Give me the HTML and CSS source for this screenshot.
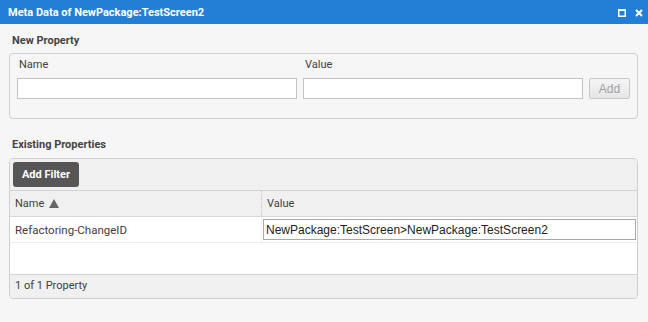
FILE: index.html
```html
<!DOCTYPE html>
<html>
<head>
<meta charset="utf-8">
<link rel="stylesheet" href="styles.css">
</head>
<body>
<div class="window">
  <div class="titlebar">
    <span class="title">Meta Data of NewPackage:TestScreen2</span>
    <span class="tools">
      <svg class="tool" width="8" height="8" viewBox="0 0 8 8"><rect x="0.75" y="1" width="6.5" height="6.25" fill="none" stroke="#fff" stroke-width="1.5"/><rect x="0" y="0" width="8" height="2" fill="#fff"/></svg>
      <svg class="tool" width="8" height="8" viewBox="0 0 8 8"><path d="M1 1 L7 7 M7 1 L1 7" stroke="#fff" stroke-width="2"/></svg>
    </span>
  </div>
  <div class="content">
    <div class="section-title">New Property</div>
    <div class="fieldset">
      <div class="form-grid">
        <label class="lbl">Name</label>
        <label class="lbl">Value</label>
        <span></span>
        <input class="txt" type="text">
        <input class="txt" type="text">
        <button class="add-btn">Add</button>
      </div>
    </div>
    <div class="section-title second">Existing Properties</div>
    <div class="grid">
      <div class="toolbar"><button class="filter-btn">Add Filter</button></div>
      <div class="row header">
        <div class="cell c-name">Name <svg class="sort" width="10" height="9" viewBox="0 0 10 9"><path d="M5 0 L10 9 L0 9 Z" fill="#666"/></svg></div>
        <div class="cell c-value">Value</div>
      </div>
      <div class="row data">
        <div class="cell c-name">Refactoring-ChangeID</div>
        <div class="cell c-value edit"><input class="editor" type="text" value="NewPackage:TestScreen&gt;NewPackage:TestScreen2"></div>
      </div>
      <div class="empty"></div>
      <div class="footer">1 of 1 Property</div>
    </div>
  </div>
</div>
</body>
</html>
```
FILE: styles.css
```css
* { box-sizing: border-box; }
html, body { margin: 0; padding: 0; }
body {
  width: 648px;
  height: 322px;
  background: #f6f6f6;
  font-family: Roboto, "Liberation Sans", sans-serif;
  color: #404040;
  overflow: hidden;
}
.titlebar {
  height: 24px;
  background: #237fd6;
  display: flex;
  align-items: center;
  justify-content: space-between;
  padding: 0 5px 0 8px;
}
.title {
  color: #fff;
  font-weight: bold;
  font-size: 11px;
}
.tools { display: flex; gap: 9px; align-items: center; padding-top: 1px; }
.tool { display: block; }
.content { padding: 0 10px 0 9px; }
.section-title {
  padding: 10px 0 0 3px;
  line-height: 14px;
  margin-bottom: 5px;
  font-size: 11px;
  font-weight: bold;
  color: #444;
}
.section-title.second { padding-top: 19px; margin-bottom: 6px; }
.fieldset {
  border: 1px solid #cfcfcf;
  border-radius: 4px;
  height: 66px;
  padding: 4px 7px 0 7px;
}
.form-grid {
  display: grid;
  grid-template-columns: 280px 280px 41px;
  column-gap: 6px;
  row-gap: 6px;
}
.lbl {
  font-size: 11px;
  line-height: 14px;
  padding-left: 2px;
  color: #404040;
}
.txt {
  height: 21px;
  border: 1px solid #c4c4c4;
  background: #fff;
  margin: 0;
  padding: 0 3px;
  font: 12px "Liberation Sans", sans-serif;
}
.add-btn {
  height: 21px;
  margin: 0;
  border: 1px solid #c8c8c8;
  border-radius: 2px;
  background: linear-gradient(#f4f4f4, #e6e6e6);
  color: #a0a0a0;
  font: 12px "Liberation Sans", sans-serif;
  padding: 0;
}
.grid {
  border: 1px solid #cfcfcf;
  border-radius: 4px;
  height: 141px;
  display: flex;
  flex-direction: column;
  overflow: hidden;
  background: #fff;
}
.toolbar {
  height: 32px;
  background: #f0f0f0;
  border-bottom: 1px solid #d2d2d2;
  padding: 3px 0 0 3px;
}
.filter-btn {
  width: 66px;
  height: 25px;
  margin: 0;
  border: none;
  border-radius: 3px;
  background: #565656;
  color: #fff;
  font-family: Roboto, sans-serif;
  font-weight: bold;
  font-size: 11px;
  padding: 0;
}
.row { display: flex; }
.cell {
  font-size: 11px;
  display: flex;
  align-items: center;
}
.c-name { width: 252px; padding-left: 5px; }
.c-value { flex: 1; padding-left: 5px; }
.header {
  height: 26px;
  background: #f0f0f0;
  border-bottom: 1px solid #d8d8d8;
}
.header .c-name { border-right: 1px dotted #c8c8c8; }
.sort { margin-left: 5px; margin-top: -1px; }
.data {
  height: 26px;
  border-bottom: 1px solid #ececec;
}
.data .c-name { border-right: 1px solid #f0f0f0; font-size: 11.5px; }
.c-value.edit { padding: 0 1px 0 1px; }
.editor {
  width: 373px;
  height: 21px;
  margin: 0;
  border: 1px solid #a8a8a8;
  background: #fff;
  padding: 0 2px;
  font: 12px "Liberation Sans", sans-serif;
  color: #222;
}
.empty { flex: 1; }
.footer {
  height: 24px;
  background: #f0f0f0;
  border-top: 1px solid #d2d2d2;
  font-size: 11px;
  line-height: 22px;
  padding-left: 5px;
}
```
